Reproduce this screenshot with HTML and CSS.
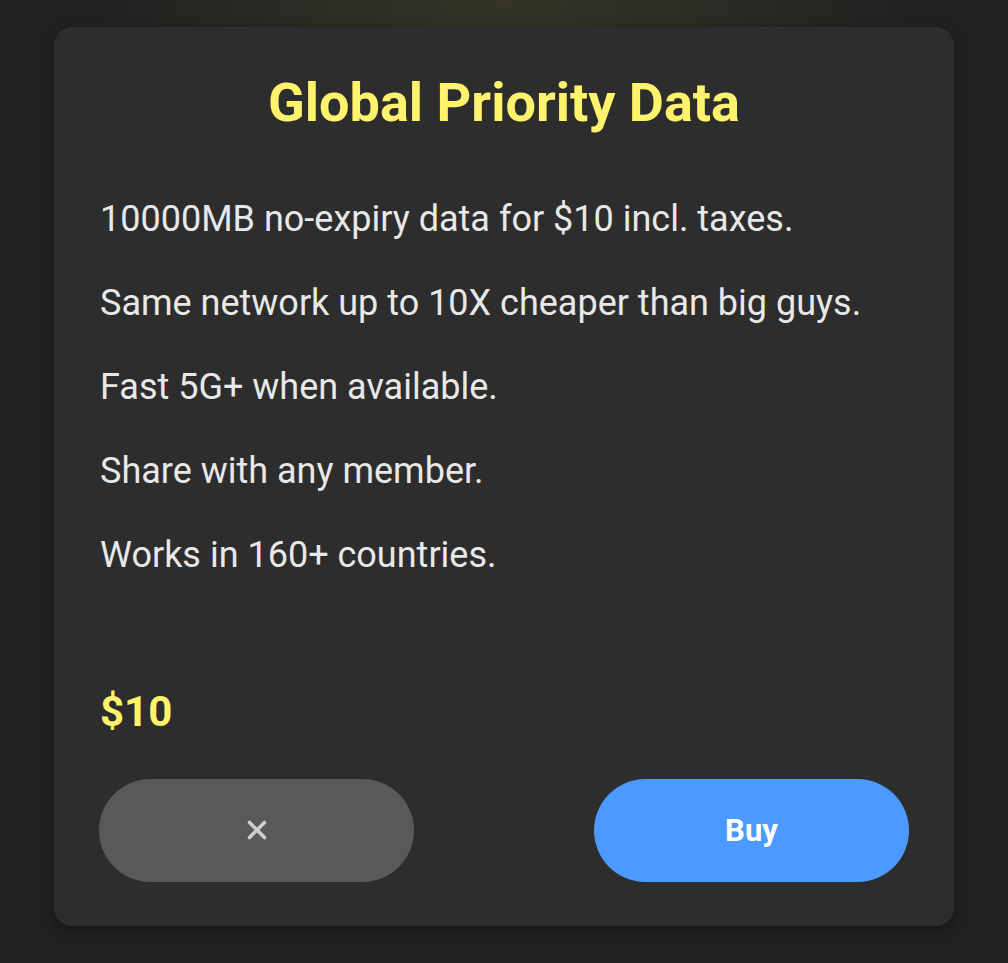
FILE: index.html
```html
<!DOCTYPE html>
<html>
<head>
<meta charset="utf-8">
<link rel="stylesheet" href="styles.css">
</head>
<body>
<div class="page">
  <div class="card">
    <h1 class="title">Global Priority Data</h1>
    <div class="features">
      <p>10000MB no-expiry data for $10 incl. taxes.</p>
      <p>Same network up to 10X cheaper than big guys.</p>
      <p>Fast 5G+ when available.</p>
      <p>Share with any member.</p>
      <p>Works in 160+ countries.</p>
    </div>
    <div class="price">$10</div>
    <div class="actions">
      <button class="btn btn-cancel" aria-label="Close">
        <svg class="close-icon" width="22" height="22" viewBox="0 0 22 22"><path d="M3.5 3.5 L18.5 18.5 M18.5 3.5 L3.5 18.5" stroke="#cfcfcf" stroke-width="3.6" stroke-linecap="round"/></svg>
      </button>
      <button class="btn btn-buy">Buy</button>
    </div>
  </div>
</div>
</body>
</html>
```
FILE: styles.css
```css
html, body {
  margin: 0;
  padding: 0;
}
body {
  width: 1008px;
  height: 963px;
  overflow: hidden;
  background: #212121;
  font-family: Roboto, "Liberation Sans", sans-serif;
}
.page {
  height: 100%;
  padding: 27px 54px 0 54px;
  box-sizing: border-box;
  background: radial-gradient(ellipse 420px 220px at 504px 0px, rgba(70, 68, 45, 0.55), rgba(33, 33, 33, 0) 100%);
}
.card {
  width: 900px;
  height: 899px;
  box-sizing: border-box;
  background: #2d2d2d;
  border-radius: 18px;
  box-shadow: 0 4px 14px rgba(0, 0, 0, 0.35);
  padding: 46px 45px 44px 45px;
  display: flex;
  flex-direction: column;
}
.title {
  margin: 0;
  text-align: center;
  color: #fff36d;
  font-size: 54px;
  line-height: 60px;
  font-weight: 700;
}
.features {
  margin-top: 64px;
  display: flex;
  flex-direction: column;
  gap: 40px;
}
.features p {
  margin: 0 0 0 1px;
  color: #e8e8e8;
  font-size: 36px;
  line-height: 44px;
}
.price {
  margin-top: auto;
  margin-left: 1px;
  color: #fff36d;
  font-size: 42px;
  font-weight: 700;
  line-height: 48px;
}
.actions {
  margin-top: 43px;
  display: flex;
  justify-content: space-between;
}
.btn {
  width: 315px;
  height: 103px;
  border: none;
  border-radius: 52px;
  display: flex;
  align-items: center;
  justify-content: center;
  font-family: inherit;
  padding: 0;
}
.btn-cancel {
  background: #595959;
}
.close-icon {
  margin-top: -2px;
}
.btn-buy {
  background: #4b9aff;
  color: #ffffff;
  font-size: 31px;
  font-weight: 700;
}
```
